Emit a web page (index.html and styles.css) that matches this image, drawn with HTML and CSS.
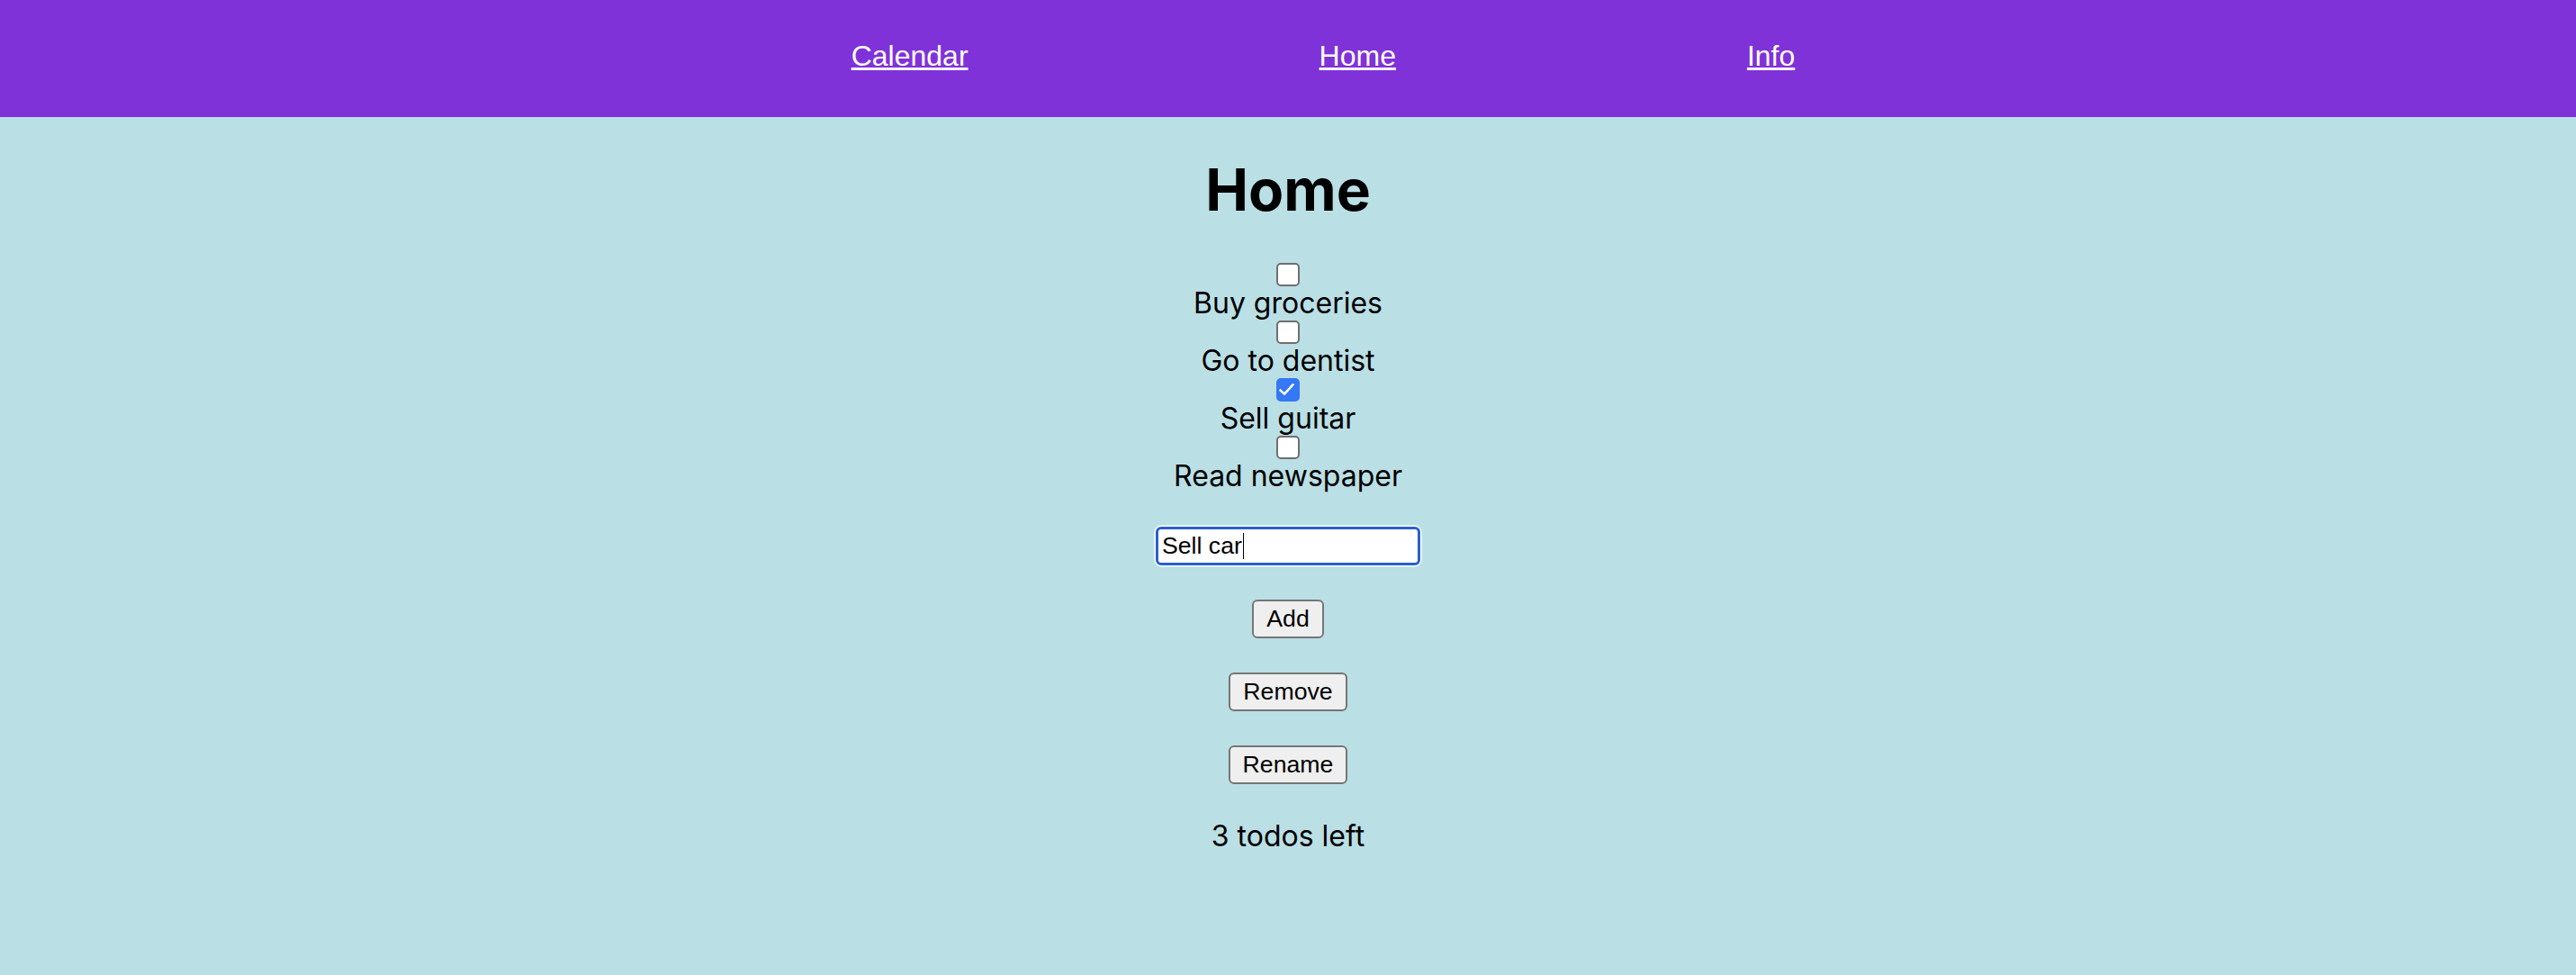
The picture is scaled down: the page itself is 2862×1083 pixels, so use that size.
FILE: index.html
```html
<!DOCTYPE html>
<html lang="en">
<head>
<meta charset="utf-8">
<title>Home</title>
<link rel="stylesheet" href="styles.css">
</head>
<body>
<header class="topbar">
  <nav>
    <ul class="nav-list">
      <li><a class="nav-link" href="#">Calendar</a></li>
      <li><a class="nav-link" href="#">Home</a></li>
      <li><a class="nav-link" href="#">Info</a></li>
    </ul>
  </nav>
</header>
<main class="page">
  <h1 class="title">Home</h1>
  <ul class="todos">
    <li class="todo"><input class="todo-check" type="checkbox"><span class="todo-text">Buy groceries</span></li>
    <li class="todo"><input class="todo-check" type="checkbox"><span class="todo-text">Go to dentist</span></li>
    <li class="todo"><input class="todo-check" type="checkbox" checked><span class="todo-text">Sell guitar</span></li>
    <li class="todo"><input class="todo-check" type="checkbox"><span class="todo-text">Read newspaper</span></li>
  </ul>
  <div class="field">
    <input class="new-todo" type="text" value="Sell car">
    <span class="caret"></span>
  </div>
  <button class="action" type="button">Add</button>
  <button class="action" type="button">Remove</button>
  <button class="action" type="button">Rename</button>
  <p class="remaining">3 todos left</p>
</main>
</body>
</html>
```
FILE: styles.css
```css
html, body {
  margin: 0;
  padding: 0;
}

body {
  background: #badfe5;
  font-family: Inter, "Noto Sans", sans-serif;
  font-size: 32px;
  color: #000;
}

.topbar {
  background: #8032d9;
  height: 130px;
  box-sizing: border-box;
  padding-top: 44px;
}

.nav-list {
  list-style: none;
  margin: 0;
  padding: 0 0 0 78px;
  display: flex;
  justify-content: center;
  gap: 390px;
  font-family: "Liberation Sans", Arial, sans-serif;
  font-size: 32px;
}

.nav-link {
  color: #fff;
  text-decoration: underline;
}

.page {
  display: flex;
  flex-direction: column;
  align-items: center;
}

.title {
  font-size: 64px;
  font-weight: 700;
  line-height: normal;
  margin: 42px 0 43px;
}

.todos {
  list-style: none;
  margin: 0;
  padding: 0;
  display: flex;
  flex-direction: column;
  align-items: center;
}

.todo {
  display: flex;
  flex-direction: column;
  align-items: center;
}

.todo-check {
  -webkit-appearance: none;
  appearance: none;
  margin: 0;
  width: 26px;
  height: 26px;
  box-sizing: border-box;
  border: 2px solid #6f6f6f;
  border-radius: 5px;
  background: #fff;
  position: relative;
}

.todo-check:checked {
  background: #3478f6;
  border-color: #3478f6;
}

.todo-check:checked::after {
  content: "";
  position: absolute;
  left: 5.5px;
  top: 0px;
  width: 6px;
  height: 14px;
  border: solid #fff;
  border-width: 0 3.5px 3.5px 0;
  border-radius: 1px;
  transform: rotate(43deg);
}

.todo-text {
  line-height: 38px;
}

.field {
  position: relative;
  margin-top: 37px;
  display: flex;
}

.new-todo {
  margin: 0;
  width: 294px;
  height: 43px;
  box-sizing: border-box;
  border: 3px solid #2a5fcf;
  border-radius: 6px;
  box-shadow: 0 0 0 1.5px #fff;
  background: #fff;
  color: #000;
  font-family: "Liberation Sans", Arial, sans-serif;
  font-size: 26.67px;
  padding: 0 4px;
  outline: none;
}

.caret {
  position: absolute;
  left: 96.5px;
  top: 6.5px;
  width: 1.5px;
  height: 29px;
  background: #000;
}

.action {
  margin-top: 38px;
  font-family: "Liberation Sans", Arial, sans-serif;
  font-size: 26.67px;
  line-height: 31px;
  padding: 4px 14px;
  border: 2px solid #767676;
  border-radius: 6px;
  background: #efefef;
  color: #000;
}

.remaining {
  margin: 38px 0 0;
  line-height: normal;
}
```
